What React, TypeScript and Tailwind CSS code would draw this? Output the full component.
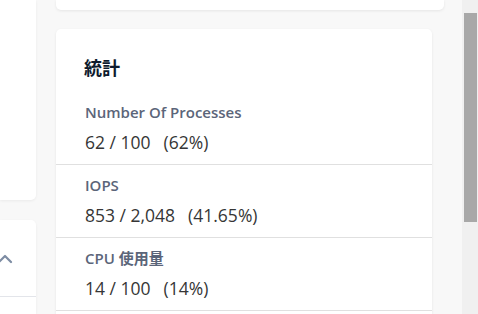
const stats = [
  { label: "Number Of Processes", value: "62 / 100", pct: "(62%)" },
  { label: "IOPS", value: "853 / 2,048", pct: "(41.65%)" },
  { label: "CPU 使用量", value: "14 / 100", pct: "(14%)" },
];

const font = {
  fontFamily: '"Open Sans", "Noto Sans CJK JP", sans-serif',
};

const App = () => {
  return (
    <div
      className="flex w-[478px] h-[314px] overflow-hidden bg-[#f8f8f8]"
      style={font}
    >
      {/* left column, mostly off screen */}
      <div className="w-[36px] shrink-0 flex flex-col gap-[20px]">
        <div className="h-[200px] bg-white rounded-br-[5px] shadow-[0_1px_3px_rgba(0,0,0,0.06)]" />
        <div className="flex-1 bg-white rounded-tr-[5px] shadow-[0_1px_3px_rgba(0,0,0,0.06)]">
          <div className="h-[77px] flex items-center border-b border-[#e3e5ea]">
            <svg
              width="16"
              height="10"
              viewBox="0 0 16 10"
              className="ml-[-3px] mt-[2px]"
              fill="none"
              stroke="#7d8ca3"
              strokeWidth="2.2"
              strokeLinecap="round"
              strokeLinejoin="round"
            >
              <path d="M2 8 L8 2 L14 8" />
            </svg>
          </div>
        </div>
      </div>

      {/* main column */}
      <div className="ml-[20px] w-[388px] shrink-0 flex flex-col gap-[19px]">
        <div className="h-[10px] bg-white rounded-b-[5px] shadow-[0_1px_3px_rgba(0,0,0,0.08)]" />
        <div className="w-[376px] flex-1 bg-white rounded-t-[5px] shadow-[0_1px_3px_rgba(0,0,0,0.08)]">
          <h2 className="pl-[28px] pt-[27px] pb-[12px] text-[18px] leading-[24px] font-bold text-[#0d1b2e]">
            統計
          </h2>
          {stats.map((s) => (
            <div
              key={s.label}
              className="pl-[29px] h-[73px] pt-[10px] border-b border-[#e0e0e0] flex flex-col"
            >
              <span className="text-[15px] leading-[20px] font-semibold text-[#5b6579]">
                {s.label}
              </span>
              <span className="mt-[8px] text-[17.5px] leading-[24px] text-[#363636]">
                {s.value}
                <span className="ml-[13px]">{s.pct}</span>
              </span>
            </div>
          ))}
        </div>
      </div>

      {/* scrollbar */}
      <div className="ml-auto w-[16px] h-full bg-[#f0f0f0]">
        <div className="mt-[13px] ml-[2px] w-[13px] h-[209px] bg-[#a8a8a8]" />
      </div>
    </div>
  );
};

export default App;
